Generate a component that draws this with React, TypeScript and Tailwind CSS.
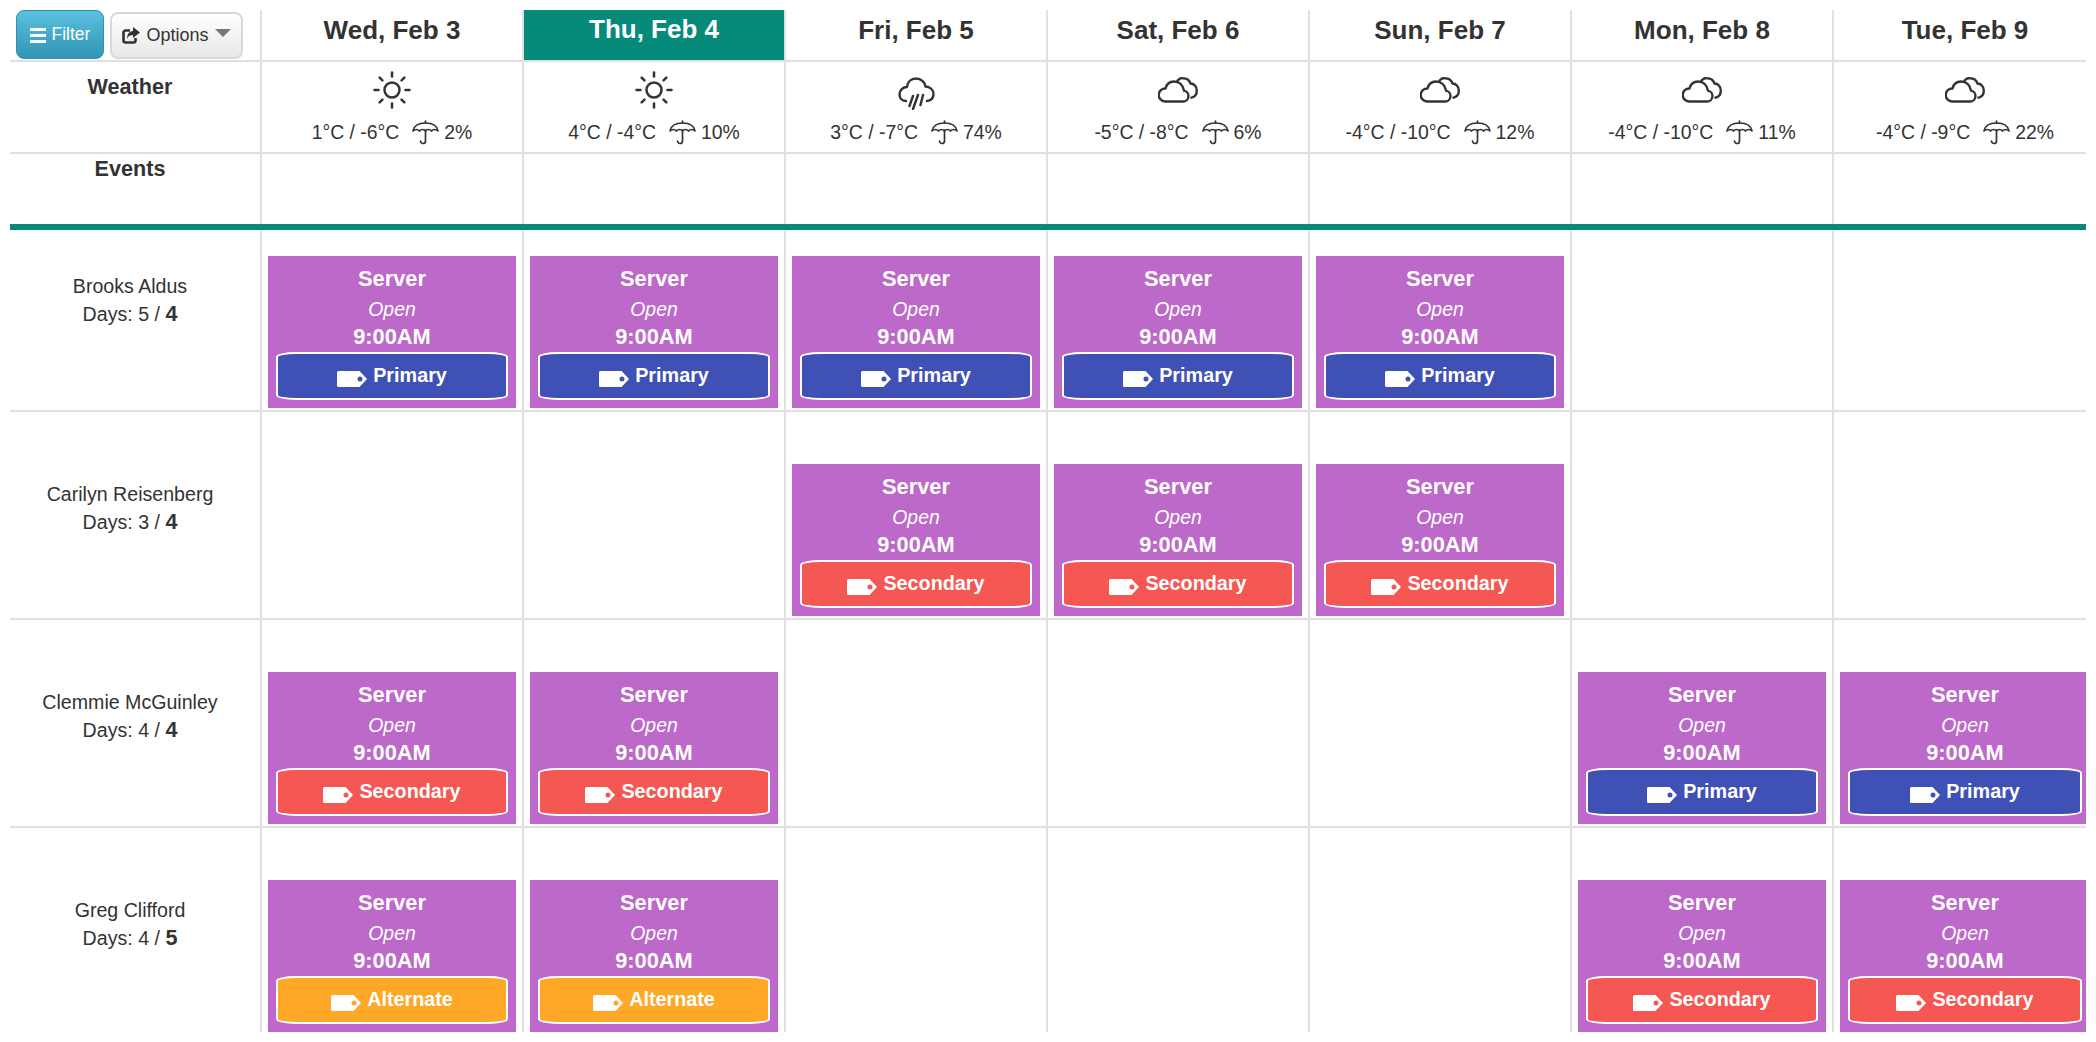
import React from "react";

const font = "font-['Liberation_Sans',Arial,sans-serif]";

function Sun() {
  const rays = [0, 45, 90, 135, 180, 225, 270, 315];
  return (
    <svg width="38" height="38" viewBox="0 0 38 38" fill="none" stroke="#333" strokeWidth="2.5" strokeLinecap="round">
      <circle cx="19" cy="19" r="7.500" />
      {rays.map((a) => (
        <line key={a} x1="19" y1="1.500" x2="19" y2="5.500" transform={`rotate(${a} 19 19)`} />
      ))}
    </svg>
  );
}

function Cloud() {
  return (
    <svg width="40" height="26" viewBox="0 0 40 26" fill="none" stroke="#333" strokeWidth="2.4" strokeLinecap="round" strokeLinejoin="round">
      <path d="M7 24.500H25a5.500 5.500 0 0 0 1-10.900C25 8 21 4.500 16 4.500 11.500 4.500 8.500 7.500 7.500 11.500A6.500 6.500 0 0 0 7 24.500z" />
      <path d="M19 4.500C20.500 2 23 1 25 1.200 28.500 1.200 31.500 3.500 32.500 6.500 36 6.500 38.800 9.500 38.800 13.500 38.800 17.500 36.500 20 33.500 20.700" />
    </svg>
  );
}

function Rain() {
  return (
    <svg width="37" height="33" viewBox="0 0 37 33" fill="none" stroke="#333" strokeWidth="2.4" strokeLinecap="round" strokeLinejoin="round" className="mt-[6px]">
      <path d="M8 24C3.500 24 1.500 21 1.500 17.500 1.500 13 5 10 9 10 9.500 5 13 1.500 18 1.500 23 1.500 27 5 27.500 9.500 32 9.500 35.500 13 35.500 17 35.500 21 33 23.500 29 24" />
      <path d="M15 19l-3.500 10M20 18l-5 14M25 18l-2.500 10" />
    </svg>
  );
}

function Umbrella() {
  return (
    <svg width="27" height="25" viewBox="0 0 27 25" fill="none" stroke="#333" strokeWidth="1.700" strokeLinecap="round" strokeLinejoin="round" className="shrink-0">
      <path d="M1 11C2 5.500 7 3 13.500 3S25 5.500 26 11c-2-2-5-2-6.500 0-1.500-2-4.500-2-6 0-1.500-2-4.500-2-6 0-1.500-2-4.500-2-6.500 0z" />
      <path d="M13.500 1v2M13.500 10v11a2.500 2.500 0 0 1-5 0" />
    </svg>
  );
}

function Tag() {
  return (
    <svg width="30" height="16" viewBox="0 0 30 16" className="shrink-0">
      <path fill="#fff" fillRule="evenodd" d="M1.500 0H22.500L30 8L22.500 16H1.500A1.500 1.500 0 0 1 0 14.500V1.500A1.500 1.500 0 0 1 1.500 0zM20.500 8a2.500 2.500 0 1 0 5 0a2.500 2.500 0 1 0-5 0z" />
    </svg>
  );
}

type Kind = "P" | "S" | "A";

function Shift({ kind, wide }: { kind: Kind; wide: boolean }) {
  const label = kind === "P" ? "Primary" : kind === "S" ? "Secondary" : "Alternate";
  const bg = kind === "P" ? "bg-[#3f51b5]" : kind === "S" ? "bg-[#f55753]" : "bg-[#ffa726]";
  return (
    <div className="overflow-hidden">
      <div className={`${wide ? "w-[250px]" : ""} h-[152px] bg-[#bc69ca] text-white text-center flex flex-col`}>
        <div className="mt-[8px] h-[30px] leading-[30px] text-[21.8px] font-bold">Server</div>
        <div className="h-[31px] leading-[30px] text-[19.4px] italic">Open</div>
        <div className="h-[24px] leading-[24px] text-[21.8px] font-bold">9:00AM</div>
        <div className={`mt-[3px] mx-[8px] h-[48px] border-2 border-white rounded-[20px/5px] ${bg} flex items-center justify-center gap-[6px] pb-[3px]`}>
          <span className="mt-[9px] flex"><Tag /></span>
          <span className="text-[19.8px] font-bold leading-[24px]">{label}</span>
        </div>
      </div>
    </div>
  );
}

const days = [
  { d: "Wed, Feb 3", i: "sun", t: "1°C / -6°C", p: "2%" },
  { d: "Thu, Feb 4", i: "sun", t: "4°C / -4°C", p: "10%" },
  { d: "Fri, Feb 5", i: "rain", t: "3°C / -7°C", p: "74%" },
  { d: "Sat, Feb 6", i: "cloud", t: "-5°C / -8°C", p: "6%" },
  { d: "Sun, Feb 7", i: "cloud", t: "-4°C / -10°C", p: "12%" },
  { d: "Mon, Feb 8", i: "cloud", t: "-4°C / -10°C", p: "11%" },
  { d: "Tue, Feb 9", i: "cloud", t: "-4°C / -9°C", p: "22%" },
];

const people: { name: string; a: string; b: string; s: (Kind | null)[] }[] = [
  { name: "Brooks Aldus", a: "5", b: "4", s: ["P", "P", "P", "P", "P", null, null] },
  { name: "Carilyn Reisenberg", a: "3", b: "4", s: [null, null, "S", "S", "S", null, null] },
  { name: "Clemmie McGuinley", a: "4", b: "4", s: ["S", "S", null, null, null, "P", "P"] },
  { name: "Greg Clifford", a: "4", b: "5", s: ["A", "A", null, null, null, "S", "S"] },
];

const grid = "grid grid-cols-[252px_repeat(6,262px)_252px]";
const labelCell = "border-r-2 border-[#e0e0e0] pr-[10px] text-center";
const dayCell = "border-r-2 border-[#e0e0e0] text-center px-[6px]";
const lastCell = "text-center pl-[10px]";
const lastCardCell = "pl-[6px] min-w-0";

export default function App() {
  return (
    <div className={`${font} w-[2096px] h-[1042px] bg-white text-[#333] pt-[10px] px-[10px] overflow-hidden`}>
      {/* header */}
      <div className={`${grid} h-[52px] border-b-2 border-[#e0e0e0]`}>
        <div className={`${labelCell} pl-[6px] flex gap-[6px] items-start`}>
          <button className="w-[88px] h-[49px] rounded-[8px] border border-[#2f8fae] bg-gradient-to-b from-[#5bc0de] to-[#2f96b4] text-white text-[17.5px] flex items-center justify-center gap-[6px]">
            <svg width="16" height="16" viewBox="0 0 16 16" fill="#fff"><rect y="1" width="16" height="3" /><rect y="7" width="16" height="3" /><rect y="13" width="16" height="3" /></svg>
            Filter
          </button>
          <button className="mt-[2px] w-[133px] h-[47px] rounded-[8px] border-2 border-[#d8d8d8] bg-gradient-to-b from-white to-[#e8e8e8] text-[#333] text-[18px] flex items-center justify-center gap-[6px]">
            <svg width="18" height="17" viewBox="0 0 18 17" fill="none" stroke="#333" strokeWidth="2.6" strokeLinejoin="round">
              <path d="M8 3.500H3.500a2 2 0 0 0-2 2v8a2 2 0 0 0 2 2h8a2 2 0 0 0 2-2V11" />
              <path fill="#333" stroke="none" d="M11 0l7 5.500-7 5.500V8c-3 0-5 1-6 4 0-5 2-7.500 6-8z" />
            </svg>
            Options
            <svg width="16" height="8" viewBox="0 0 16 8" fill="#777" className="mb-[5px]"><path d="M0 0h16L8 8z" /></svg>
          </button>
        </div>
        {days.map((d, i) => (
          <div
            key={d.d}
            className={`${i === 6 ? lastCell : i === 1 ? "border-r-2 border-[#e0e0e0] text-center" : dayCell} text-[26px] font-bold ${i === 1 ? "text-white leading-[39px]" : "leading-[40px]"}`}
          >
            <div className={i === 1 ? "h-[50px] bg-[#068a7a]" : ""}>{d.d}</div>
          </div>
        ))}
      </div>
      {/* weather */}
      <div className={`${grid} h-[92px] border-b-2 border-[#e0e0e0]`}>
        <div className={`${labelCell} text-[21.6px] font-bold leading-[26px] pt-[12px]`}>Weather</div>
        {days.map((d, i) => (
          <div key={d.d} className={`${i === 6 ? lastCell : dayCell} flex flex-col items-center`}>
            <div className="h-[46px] mt-[5px] flex items-center justify-center">
              {d.i === "sun" ? <Sun /> : d.i === "rain" ? <Rain /> : <Cloud />}
            </div>
            <div className="flex items-center text-[19.4px] leading-[26px] mt-[6px] whitespace-nowrap">
              <span>{d.t}</span>
              <span className="ml-[13px] mr-[5px] flex"><Umbrella /></span>
              <span>{d.p}</span>
            </div>
          </div>
        ))}
      </div>
      {/* events */}
      <div className={`${grid} h-[76px] border-b-[6px] border-[#068a7a]`}>
        <div className={`${labelCell} text-[21.6px] font-bold leading-[26px] pt-[2px]`}>Events</div>
        {days.map((d, i) => (
          <div key={d.d} className={i === 6 ? lastCell : dayCell} />
        ))}
      </div>
      {/* rows */}
      {people.map((p, r) => (
        <div key={p.name} className={`${grid} ${r === 0 ? "h-[182px]" : r === 3 ? "h-[204px]" : "h-[208px]"} ${r === 3 ? "" : "border-b-2 border-[#e0e0e0]"}`}>
          <div className={`${labelCell} ${r === 0 ? "pt-[42px]" : "pt-[68px]"} text-[19.6px] leading-[28px]`}>
            <div>{p.name}</div>
            <div>
              Days: {p.a} / <b className="text-[21.6px]">{p.b}</b>
            </div>
          </div>
          {p.s.map((k, i) => (
            <div key={i} className={`${i === 6 ? lastCardCell : dayCell} ${r === 0 ? "pt-[26px]" : "pt-[52px]"}`}>
              {k && <Shift kind={k} wide={i === 6} />}
            </div>
          ))}
        </div>
      ))}
    </div>
  );
}
